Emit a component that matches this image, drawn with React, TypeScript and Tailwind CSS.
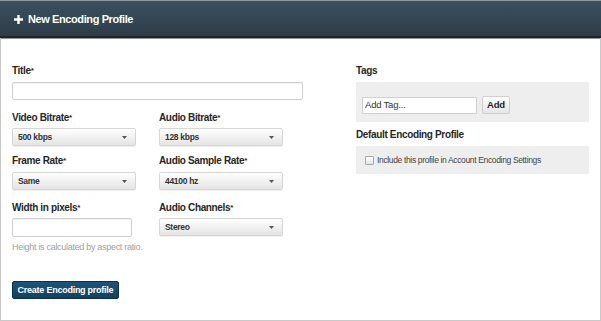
function Label({ children, star = false, className = "" }: { children: React.ReactNode; star?: boolean; className?: string }) {
  return (
    <div className={`h-[13px] leading-[13px] text-[10px] font-bold text-[#262626] tracking-[-0.35px] whitespace-nowrap ${className}`}>
      {children}
      {star && <span className="text-[8px] align-top">*</span>}
    </div>
  );
}

function Select({ value }: { value: string }) {
  return (
    <div className="w-[124px] h-[18px] flex items-center justify-between pl-[5px] pr-[8px] border border-[#d6d6d6] rounded-[2px] bg-gradient-to-b from-white to-[#e4e4e4] shadow-[0_1px_1px_rgba(0,0,0,0.07)]">
      <span className="text-[8.5px] font-bold text-[#333] tracking-[-0.3px]">{value}</span>
      <svg width="5" height="3" viewBox="0 0 5 3">
        <path d="M0 0h5L2.5 3z" fill="#555" />
      </svg>
    </div>
  );
}

export default function App() {
  return (
    <div className="w-[601px] h-[321px] bg-white font-['Liberation_Sans',Arial,sans-serif] flex flex-col">
      <div className="h-[38px] shrink-0 border-t border-[#8e979e] bg-gradient-to-b from-[#3b505f] to-[#2f3d48] border-b-2 border-b-[#1c262d] flex items-center pl-[14px] pt-[1px] gap-[5px] shadow-[0_1px_0_#8d959b]">
        <svg width="9" height="9" viewBox="0 0 9 9">
          <path d="M3.3 0h2.4v3.3H9v2.4H5.7V9H3.3V5.7H0V3.3h3.3z" fill="#fff" />
        </svg>
        <span className="text-white font-bold text-[11px] tracking-[-0.4px]">New Encoding Profile</span>
      </div>

      <div className="flex-1 flex pl-[11px] pt-[26px] border-x border-b border-[#c9c9c9]">
        <div className="w-[291px] flex flex-col">
          <Label star>Title</Label>
          <div className="mt-[5px] h-[18px] w-[291px] border border-[#d0d0d0] rounded-[2px] bg-white shadow-[inset_0_1px_1px_rgba(0,0,0,0.06)]" />

          <div className="flex mt-[11px]">
            <div className="w-[147px]">
              <Label star>Video Bitrate</Label>
              <div className="mt-[4px]">
                <Select value="500 kbps" />
              </div>
              <Label star className="mt-[8px]">Frame Rate</Label>
              <div className="mt-[5px]">
                <Select value="Same" />
              </div>
              <Label star className="mt-[11px]">Width in pixels</Label>
              <div className="mt-[4px] h-[19px] w-[120px] border border-[#d0d0d0] rounded-[2px] bg-white shadow-[inset_0_1px_1px_rgba(0,0,0,0.06)]" />
              <div className="mt-[5px] h-[10px] leading-[10px] text-[9px] text-[#a0a0a0] tracking-[-0.3px] whitespace-nowrap">
                Height is calculated by aspect ratio.
              </div>
            </div>
            <div className="w-[124px]">
              <Label star>Audio Bitrate</Label>
              <div className="mt-[4px]">
                <Select value="128 kbps" />
              </div>
              <Label star className="mt-[8px]">Audio Sample Rate</Label>
              <div className="mt-[5px]">
                <Select value="44100 hz" />
              </div>
              <Label star className="mt-[11px]">Audio Channels</Label>
              <div className="mt-[4px]">
                <Select value="Stereo" />
              </div>
            </div>
          </div>

          <button className="mt-[29px] w-[107px] h-[18px] bg-gradient-to-b from-[#1e5477] to-[#134160] border border-[#0d3049] rounded-[2px] text-white text-[9px] font-bold tracking-[-0.25px] leading-none">
            Create Encoding profile
          </button>
        </div>

        <div className="ml-[53px] w-[233px] flex flex-col">
          <Label>Tags</Label>
          <div className="mt-[5px] h-[40px] bg-[#eeeeee] flex items-end pb-[8px] pl-[6px] gap-[5px]">
            <div className="w-[115px] h-[17px] border border-[#cfcfcf] rounded-[1px] bg-white flex items-center pl-[2px]">
              <span className="text-[9.5px] text-[#333] tracking-[-0.2px]">Add Tag...</span>
            </div>
            <div className="w-[28px] h-[18px] border border-[#cfcfcf] rounded-[2px] bg-gradient-to-b from-white to-[#e6e6e6] flex items-center justify-center">
              <span className="text-[9.5px] font-bold text-[#222] tracking-[-0.2px]">Add</span>
            </div>
          </div>
          <Label className="mt-[6px]">Default Encoding Profile</Label>
          <div className="mt-[5px] h-[28px] bg-[#eeeeee] flex items-center pl-[9px] gap-[3px]">
            <div className="w-[9px] h-[9px] border border-[#a9a9a9] rounded-[1px] bg-gradient-to-b from-white to-[#e4e4e4]" />
            <span className="text-[8.5px] text-[#444] tracking-[-0.35px] whitespace-nowrap">
              Include this profile in Account Encoding Settings
            </span>
          </div>
        </div>
      </div>
    </div>
  );
}
